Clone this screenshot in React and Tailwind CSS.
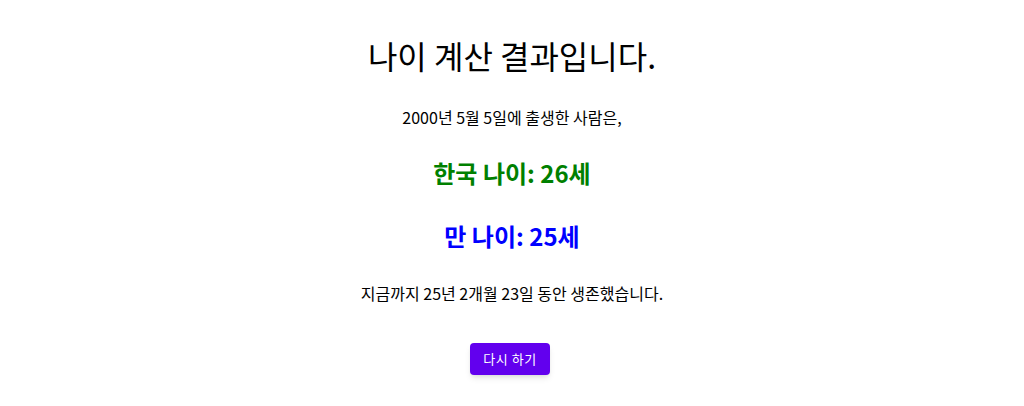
import React from 'react';

const App = () => {
  return (
    <div
      className="min-h-[406px] bg-white flex flex-col items-center text-center text-black"
      style={{ fontFamily: '"Noto Sans CJK KR", "Noto Sans", sans-serif' }}
    >
      <h1 className="mt-[35px] text-[32px] leading-[40px] font-normal">나이 계산 결과입니다.</h1>
      <p className="mt-[30px] text-base leading-6">2000년 5월 5일에 출생한 사람은,</p>
      <h2 className="mt-[28px] text-2xl leading-8 font-bold text-[#008000]">한국 나이: 26세</h2>
      <h2 className="mt-[31px] text-2xl leading-8 font-bold text-[#0000ff]">만 나이: 25세</h2>
      <p className="mt-[29px] text-base leading-6">지금까지 25년 2개월 23일 동안 생존했습니다.</p>
      <button className="mt-[38px] mr-[4px] h-8 w-20 rounded bg-[#6200ee] text-[13px] tracking-[0.5px] text-white shadow-md">
        다시 하기
      </button>
    </div>
  );
};

export default App;
